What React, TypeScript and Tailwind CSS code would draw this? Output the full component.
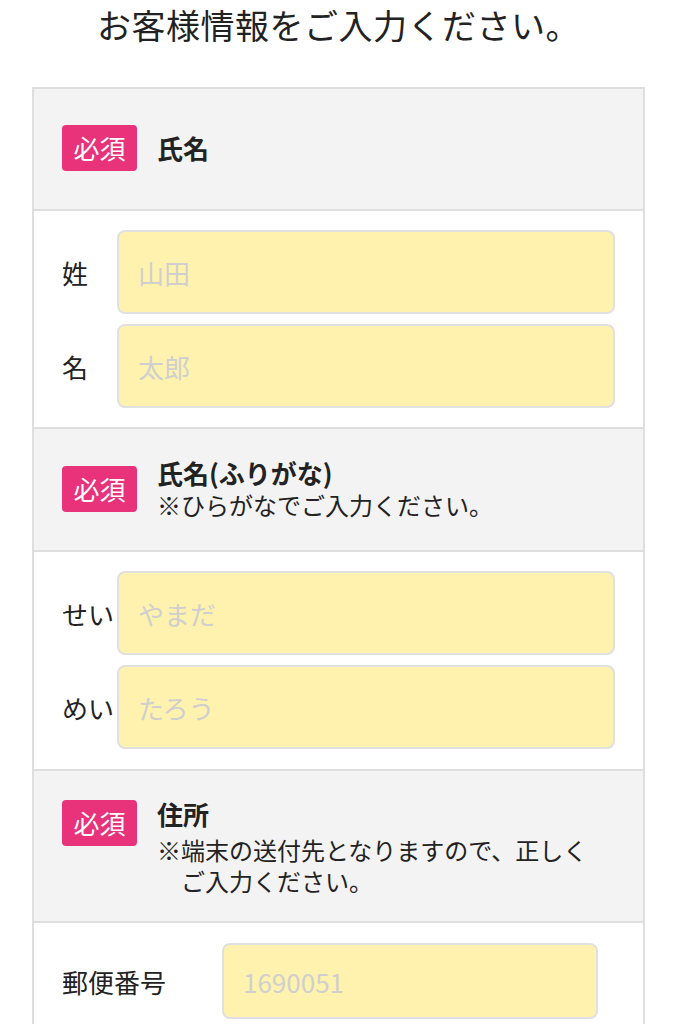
const FONT = 'font-["Noto_Sans_CJK_JP","Noto_Sans",sans-serif]'

function Badge({ className = '' }: { className?: string }) {
  return (
    <span
      className={`shrink-0 w-[75px] h-[46px] flex items-center justify-center rounded-[4px] bg-[#e8327a] text-white text-[26px] leading-none ${className}`}
    >
      必須
    </span>
  )
}

function Field({ placeholder, className = '' }: { placeholder: string; className?: string }) {
  return (
    <input
      type="text"
      placeholder={placeholder}
      className={`min-w-0 rounded-[8px] border-2 border-[#e0e0e0] bg-[#fef2ae] px-[19px] text-[26px] text-[#222] placeholder:text-[#cfcfcf] outline-none ${className}`}
    />
  )
}

function NameRow({ label, placeholder }: { label: string; placeholder: string }) {
  return (
    <div className="flex items-center">
      <span className="w-[55px] shrink-0 text-[26px] whitespace-nowrap">{label}</span>
      <Field placeholder={placeholder} className="flex-1 h-[84px]" />
    </div>
  )
}

export default function App() {
  return (
    <div className={`min-h-screen bg-white text-[#222] ${FONT}`}>
      {/* Heading */}
      <h1 className="h-[48px] flex items-center justify-center text-[34px] font-normal tracking-[0.5px]">
        お客様情報をご入力ください。
      </h1>

      <div className="mx-[32px] mt-[39px] border-2 border-[#dedede] border-b-0">
        {/* 氏名 */}
        <div className="flex items-center gap-5 bg-[#f3f3f3] px-[28px] pt-[36px] pb-[38px]">
          <Badge />
          <span className="text-[26px] font-bold leading-[32px]">氏名</span>
        </div>
        <div className="flex flex-col gap-[10px] border-t-2 border-[#dedede] pl-[28px] pr-[28px] pt-[19px] pb-[19px]">
          <NameRow label="姓" placeholder="山田" />
          <NameRow label="名" placeholder="太郎" />
        </div>

        {/* 氏名(ふりがな) */}
        <div className="flex items-center gap-5 border-t-2 border-[#dedede] bg-[#f3f3f3] px-[28px] pt-[28px] pb-[29px]">
          <Badge />
          <div className="flex flex-col">
            <span className="text-[26px] font-bold leading-[32px]">氏名(ふりがな)</span>
            <span className="text-[24px] leading-[32px]">※ひらがなでご入力ください。</span>
          </div>
        </div>
        <div className="flex flex-col gap-[10px] border-t-2 border-[#dedede] pl-[28px] pr-[28px] pt-[19px] pb-[20px]">
          <NameRow label="せい" placeholder="やまだ" />
          <NameRow label="めい" placeholder="たろう" />
        </div>

        {/* 住所 */}
        <div className="flex items-start gap-5 border-t-2 border-[#dedede] bg-[#f3f3f3] px-[28px] pt-[25px] pb-[25px]">
          <Badge className="mt-[4px]" />
          <div className="flex flex-col">
            <span className="text-[26px] font-bold leading-[36px] mb-[2px]">住所</span>
            <p className="text-[24px] leading-[31px] pl-[24px] -indent-[24px]">
              ※端末の送付先となりますので、正しく
              <br />
              ご入力ください。
            </p>
          </div>
        </div>
        <div className="flex items-center border-t-2 border-[#dedede] pl-[28px] pr-[45px] pt-[20px] pb-[24px]">
          <span className="w-[160px] shrink-0 text-[26px]">郵便番号</span>
          <Field placeholder="1690051" className="flex-1 h-[76px]" />
        </div>
      </div>
    </div>
  )
}
